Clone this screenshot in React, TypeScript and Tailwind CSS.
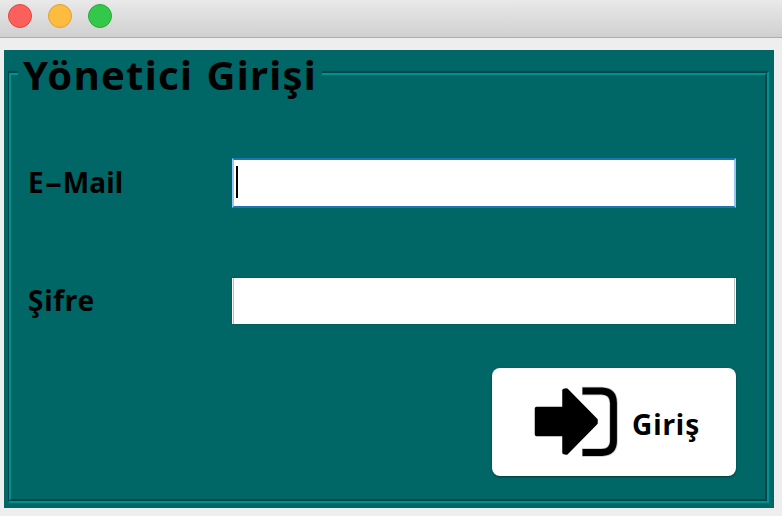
import React from 'react';

function TitleBar() {
  return (
    <header className="flex h-[38px] gap-4 border-b border-[#adadad] bg-linear-to-b from-[#e9e9e9] to-[#d0d0d0] pt-1 pl-2">
      <span className="size-6 rounded-full border border-[#e2463f] bg-[#fc605c]" />
      <span className="size-6 rounded-full border border-[#dea032] bg-[#fdbc40]" />
      <span className="size-6 rounded-full border border-[#27aa35] bg-[#34c84a]" />
    </header>
  );
}

function LoginIcon() {
  return (
    <svg width="84" height="72" viewBox="0 0 84 72" className="shrink-0">
      <path
        d="M2.500 22.500H30V4.500L32.500 4L62 34V37L32.500 67L30 66.500V48.500H2.500Z"
        fill="#000"
        stroke="#000"
        strokeWidth="3.500"
        strokeLinejoin="round"
      />
      <path d="M48 5H68Q79.500 5.500 79.500 17V55Q79.500 66 68 66.500H48" fill="none" stroke="#c4c4c4" strokeWidth="8.500" />
      <path d="M48.500 5H68Q79.500 5.500 79.500 17V55Q79.500 66 68 66.500H48.500" fill="none" stroke="#000" strokeWidth="6.800" />
    </svg>
  );
}

export default function App() {
  return (
    <div className="h-[516px] w-[782px] overflow-hidden bg-[#eeeeee] font-['Noto_Sans',sans-serif] font-bold text-black">
      <TitleBar />
      <main className="mt-3 ml-1 h-[458px] w-[770px] bg-[#006666] pt-[21px] pl-1">
        <section className="h-[432px] w-[761px] border-t-2 border-r-2 border-b-2 border-l border-t-[#004747] border-r-[#009090] border-b-[#009090] border-l-[#004747]">
          <div className="h-full border-2 border-t-[#009090] border-r-[#004747] border-b-[#004747] border-l-[#009090]">
            <h1 className="-mt-5 ml-[7px] h-[46px] w-[304px] bg-[#006666] pl-[5px] text-[40px] leading-[40px] font-bold tracking-[1.300px] whitespace-nowrap [word-spacing:1.500px]">
              Yönetici Girişi
            </h1>
            <form className="pr-[29px] pl-[17px]" onSubmit={(e) => e.preventDefault()}>
              <div className="mt-[57px] flex h-[50px] items-center justify-between">
                <label className="-mt-0.5 text-[28px] leading-[48px] tracking-[0.100px]">
                  E<span className="mr-[5px] ml-[5px] inline-block origin-center scale-x-[1.900]">-</span>Mail
                </label>
                <div className="h-[50px] w-[504px] border-2 border-x-[#9ac4f4] border-y-[#1f75b4] bg-white pt-1.5 pl-0.5">
                  <div className="h-8 w-0.5 bg-black" />
                </div>
              </div>
              <div className="mt-[70px] flex h-[46px] items-center justify-between">
                <label className="-mt-0.5 text-[28px] leading-[48px] tracking-[0.700px]">Şifre</label>
                <div className="h-[46px] w-[504px] bg-white px-px shadow-[0_0_1px_#003c3c]">
                  <div className="h-full border-x border-[#bcbcbc]" />
                </div>
              </div>
              <button
                type="submit"
                className="mt-11 ml-auto flex h-[108px] w-[244px] items-center rounded-lg bg-white pl-[42px] shadow-[0_1px_2px_#003c3c]"
              >
                <LoginIcon />
                <span className="mt-[3px] ml-3.5 text-[28px] leading-[48px] tracking-[0.900px]">Giriş</span>
              </button>
            </form>
          </div>
        </section>
      </main>
    </div>
  );
}
